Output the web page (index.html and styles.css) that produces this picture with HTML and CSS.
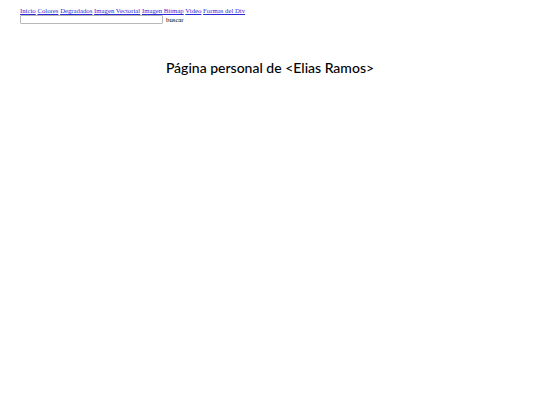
FILE: index.html
```html
<!DOCTYPE html>
<html lang="es">
<head>
<meta charset="utf-8">
<title>Página personal</title>
<link rel="stylesheet" href="styles.css">
</head>
<body>
<nav class="menu">
<a href="#">Inicio</a> <a href="#">Colores</a> <a href="#">Degradados</a> <a href="#">Imagen Vectorial</a> <a href="#">Imagen Bitmap</a> <a href="#">Video</a> <a href="#">Formas del Div</a>
</nav>
<form class="search">
<input class="search-input" type="text"><span class="search-label">buscar</span>
</form>
<h1 class="title">Página personal de &lt;Elias Ramos&gt;</h1>
</body>
</html>
```
FILE: styles.css
```css
html, body {
  margin: 0;
  background: #fff;
}
body {
  padding: 7px 20px 0 20px;
  font-family: "Liberation Serif", serif;
  font-size: 6.75px;
  line-height: 8px;
  color: #000;
}
.menu a {
  color: #2a2ad8;
}
.search {
  margin: 0;
  display: flex;
  align-items: center;
}
.search-input {
  width: 143px;
  height: 9px;
  box-sizing: border-box;
  margin: 0;
  padding: 0;
  border: 1px solid #b8b8b8;
  border-radius: 1px;
}
.search-label {
  margin-left: 3px;
}
.title {
  margin: 36px 0 0 0;
  text-align: center;
  font-family: "Lato", "Noto Sans", sans-serif;
  font-weight: 500;
  font-size: 14px;
  line-height: 16px;
}
```
